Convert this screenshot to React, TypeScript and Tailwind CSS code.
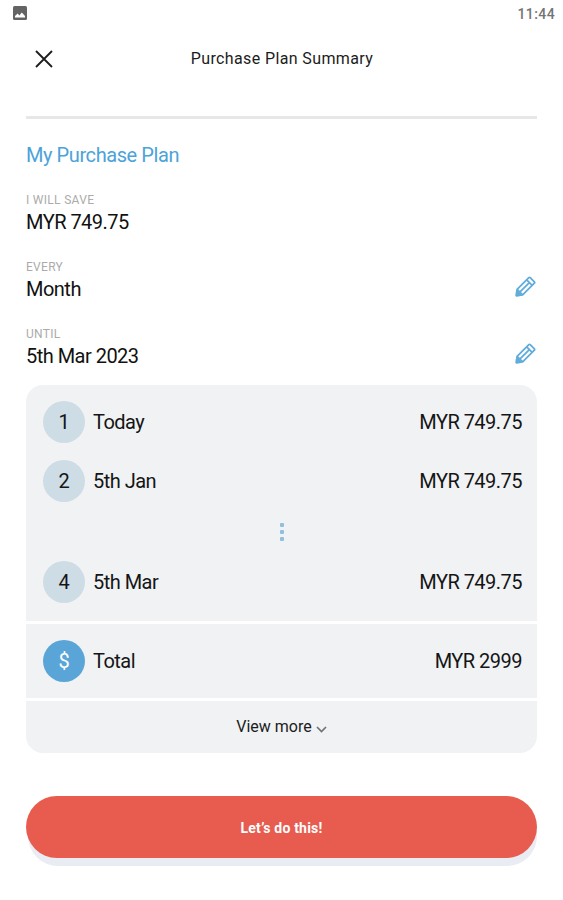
import React from "react";

function Pencil() {
  return (
    <svg className="block h-[21px] w-[21px]" viewBox="0 0 22 22" fill="none" stroke="#62acdb" strokeWidth="1.9" strokeLinejoin="round">
      <path d="M1.5 20.5 2.2 14 14.5 1.7Q15.2 1 15.9 1.7L20.3 6.1Q21 6.8 20.3 7.5L8 19.8Z" />
      <path d="M12.2 4 18 9.8M2.2 14 8 19.8M5 16.9 15 6.9" />
      <path d="M1.5 20.5 2 15.8 6.2 20Z" fill="#62acdb" />
    </svg>
  );
}

function Field({ label, value, editable }: { label: string; value: string; editable?: boolean }) {
  return (
    <div className="flex h-[67px] justify-between">
      <div>
        <div className="h-[14px] text-[12px] leading-[14px] tracking-[0.3px] text-[#ababab]">{label}</div>
        <div className="mt-[3px] text-[20px] leading-[25px] tracking-[-0.52px] text-[#111]">{value}</div>
      </div>
      {editable && (
        <div className="mt-4 mr-px">
          <Pencil />
        </div>
      )}
    </div>
  );
}

function Row({ mark, label, amount, total }: { mark: string; label: string; amount: string; total?: boolean }) {
  return (
    <div className="flex h-[42px] items-center pr-[15px] pl-[17px] text-[20px] leading-6 tracking-[-0.52px] text-[#151515]">
      <div className={`flex h-[42px] w-[42px] items-center justify-center rounded-full tracking-normal ${total ? "bg-[#5aa5d8] text-white" : "bg-[#cddce5]"}`}>{mark}</div>
      <div className="ml-2 flex-1">{label}</div>
      <div>{amount}</div>
    </div>
  );
}

export default function App() {
  return (
    <div className="h-[900px] w-[563px] overflow-hidden bg-white font-['Roboto',sans-serif]">
      <div className="flex h-[26px] items-center justify-between pr-2 pl-[13px]">
        <svg className="h-[14px] w-[14px]" viewBox="0 0 14 14">
          <rect width="14" height="14" rx="1.5" fill="#646464" />
          <path d="M2 11.5V10L4.6 7.6 6.4 9.6 8.8 6.6 12 10V11.5Z" fill="#fff" />
        </svg>
        <span className="mt-[2px] text-[14px] leading-4 font-medium tracking-[0.4px] text-[#747474]">11:44</span>
      </div>
      <header className="grid h-[90px] grid-cols-[60px_1fr_60px] pt-[22px]">
        <svg className="mt-[2px] ml-[35px] h-[18px] w-[18px]" viewBox="0 0 18 18" stroke="#1c1c1c" strokeWidth="1.8" fill="none">
          <path d="M1 1 17 17M17 1 1 17" />
        </svg>
        <h1 className="pt-px pl-px text-center text-[16px] leading-5 tracking-[0.38px] text-[#1c1c1c]">Purchase Plan Summary</h1>
      </header>
      <main className="px-[26px]">
        <div className="h-[3px] bg-[#e7e7e7]" />
        <h2 className="mt-6 h-[24px] text-[20px] leading-[25px] tracking-[-0.42px] text-[#4ba3d9]">My Purchase Plan</h2>
        <div className="mt-[26px] h-[192px]">
          <Field label="I WILL SAVE" value="MYR 749.75" />
          <Field label="EVERY" value="Month" editable />
          <Field label="UNTIL" value="5th Mar 2023" editable />
        </div>
        <section className="flex h-[368px] flex-col gap-[3px] overflow-hidden rounded-[17px]">
          <div className="h-[236px] bg-[#f0f2f4] pt-4">
            <Row mark="1" label="Today" amount="MYR 749.75" />
            <div className="h-[17px]" />
            <Row mark="2" label="5th Jan" amount="MYR 749.75" />
            <div className="flex h-[59px] flex-col items-center justify-center gap-[3px] pt-px">
              <i className="h-[4px] w-[4px] rounded-[1px] bg-[#91bfe0]" />
              <i className="h-[4px] w-[4px] rounded-[1px] bg-[#91bfe0]" />
              <i className="h-[4px] w-[4px] rounded-[1px] bg-[#91bfe0]" />
            </div>
            <Row mark="4" label="5th Mar" amount="MYR 749.75" />
          </div>
          <div className="h-[74px] bg-[#f0f2f4] pt-4">
            <Row mark="$" label="Total" amount="MYR 2999" total />
          </div>
          <div className="flex flex-1 items-center justify-center gap-1 bg-[#f0f2f4] text-[16px] leading-5 text-[#1c1c1c]">
            <span>View more</span>
            <svg className="mt-1 h-[7px] w-[11px]" viewBox="0 0 11 7" fill="none" stroke="#707274" strokeWidth="1.7">
              <path d="M1 1 5.5 5.5 10 1" />
            </svg>
          </div>
        </section>
        <button className="mt-[43px] flex h-[62px] w-full items-center justify-center rounded-full bg-[#e75c4e] pt-[3px] text-[14px] font-bold tracking-[0.2px] text-white shadow-[1px_9px_0_-1px_#e9ecf3]">
          Let’s do this!
        </button>
      </main>
    </div>
  );
}
